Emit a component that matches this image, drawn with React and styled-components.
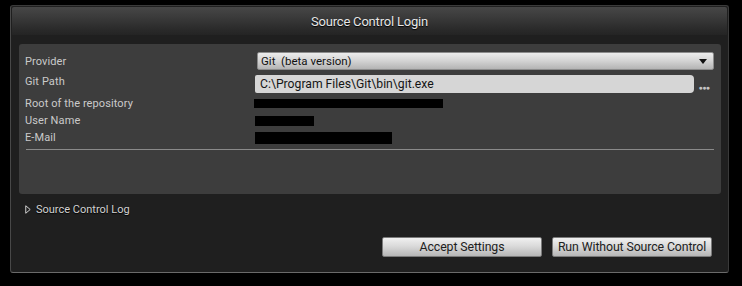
import React from "react";
import styled, { createGlobalStyle } from "styled-components";

const GlobalStyle = createGlobalStyle`
    html, body {
        margin: 0;
        padding: 0;
        background: #000;
    }
    body {
        font-family: Roboto, "Liberation Sans", sans-serif;
    }
`;

const Page = styled.div`
    width: 742px;
    height: 286px;
    padding: 5px 13px 0 10px;
    box-sizing: border-box;
`;

const Window = styled.div`
    height: 268px;
    display: flex;
    flex-direction: column;
    box-sizing: border-box;
    background: #1f1f1f;
    border: 1px solid #3a3a3a;
    border-left-color: #484848;
    border-bottom-color: #6a6a6a;
    border-radius: 3px;
`;

const TitleBar = styled.div`
    height: 28px;
    margin: 1px 1px 0;
    display: flex;
    align-items: center;
    justify-content: center;
    background: linear-gradient(#474747 0%, #3b3b3b 35%, #2a2a2a 80%, #242424 100%);
    border-radius: 2px 2px 0 0;
    color: #e6e6e6;
    font-size: 13px;
    letter-spacing: -0.2px;
    text-shadow: 0 1px 1px #000;
`;

const Panel = styled.div`
    margin: 9px 7px 0 8px;
    height: 150px;
    box-sizing: border-box;
    padding: 8px 7px 0 6px;
    background: #3d3d3d;
    border-radius: 3px;
`;

const Row = styled.div`
    display: flex;
    align-items: ${(p) => (p.$top ? "flex-start" : "center")};
    height: ${(p) => p.$h}px;
    margin-top: ${(p) => p.$mt || 0}px;
`;

const Label = styled.div`
    width: 230px;
    flex: none;
    color: #cacaca;
    font-size: 11px;
    line-height: 13px;
    letter-spacing: 0.1px;
`;

const Value = styled.div`
    flex: 1;
    display: flex;
    align-items: center;
    height: 100%;
`;

const Dropdown = styled.div`
    flex: 1;
    height: 18px;
    box-sizing: border-box;
    margin-left: 2px;
    padding: 0 6px 0 3px;
    display: flex;
    align-items: center;
    justify-content: space-between;
    background: linear-gradient(#ececec 0%, #d6d6d6 45%, #b4b4b4 100%);
    border: 1px solid #8c8c8c;
    border-radius: 2px;
    color: #111;
    font-size: 11.5px;
    white-space: pre;
`;

const Arrow = styled.span`
    width: 0;
    height: 0;
    border-left: 4px solid transparent;
    border-right: 4px solid transparent;
    border-top: 5px solid #111;
    margin-top: 1px;
`;

const TextInput = styled.div`
    flex: 1;
    height: 18px;
    box-sizing: border-box;
    padding-left: 5px;
    display: flex;
    align-items: center;
    background: #d6d6d6;
    border-radius: 2px 4px 4px 2px;
    color: #151515;
    font-size: 12.2px;
`;

const Browse = styled.span`
    width: 20px;
    flex: none;
    text-align: center;
    color: #c4c4c4;
    font-size: 7px;
    letter-spacing: -0.5px;
    padding-top: 7px;
`;

const Redacted = styled.div`
    width: ${(p) => p.$w}px;
    height: ${(p) => p.$hh}px;
    margin-left: ${(p) => p.$ml || 0}px;
    margin-top: ${(p) => p.$offset || 0}px;
    background: #000;
`;

const Separator = styled.div`
    height: 1px;
    margin: 3px 0 0 1px;
    background: #8a8a8a;
`;

const LogToggle = styled.div`
    display: flex;
    align-items: center;
    gap: 5px;
    margin: 9px 0 0 14px;
    height: 13px;
    color: #d2d2d2;
    font-size: 11px;
    text-shadow: 0 1px 1px #000;
`;

const Footer = styled.div`
    margin-top: auto;
    padding: 0 16px 15px 0;
    display: flex;
    justify-content: flex-end;
    gap: 10px;
`;

const Button = styled.button`
    width: 160px;
    height: 20px;
    padding: 0;
    box-sizing: border-box;
    background: linear-gradient(#f0f0f0 0%, #dadada 45%, #b6b6b6 100%);
    border: 1px solid #7a7a7a;
    border-radius: 2px;
    color: #202020;
    font-family: Roboto, "Liberation Sans", sans-serif;
    font-size: 12.3px;
    letter-spacing: -0.1px;
    white-space: nowrap;
`;

const App = () => {
    return (
        <Page>
            <GlobalStyle />
            <Window>
                <TitleBar>Source Control Login</TitleBar>
                <Panel>
                    <Row $h={18}>
                        <Label>Provider</Label>
                        <Value>
                            <Dropdown>
                                {"Git  (beta version)"}
                                <Arrow />
                            </Dropdown>
                        </Value>
                    </Row>
                    <Row $h={18} $mt={5} $top>
                        <Label>Git Path</Label>
                        <Value>
                            <TextInput>C:\Program Files\Git\bin\git.exe</TextInput>
                            <Browse>●●●</Browse>
                        </Value>
                    </Row>
                    <Row $h={17} $mt={2}>
                        <Label>Root of the repository</Label>
                        <Value>
                            <Redacted $w={189} $hh={9} $ml={-1} $offset={-1} />
                        </Value>
                    </Row>
                    <Row $h={17}>
                        <Label>User Name</Label>
                        <Value>
                            <Redacted $w={59} $hh={10} />
                        </Value>
                    </Row>
                    <Row $h={17}>
                        <Label>E-Mail</Label>
                        <Value>
                            <Redacted $w={137} $hh={12} $offset={1} />
                        </Value>
                    </Row>
                    <Separator />
                </Panel>
                <LogToggle>
                    <svg width="6" height="9" viewBox="0 0 6 9">
                        <path d="M0.75 0.75 L5.2 4.5 L0.75 8.25 Z" fill="none" stroke="#cfcfcf" strokeWidth="1" />
                    </svg>
                    Source Control Log
                </LogToggle>
                <Footer>
                    <Button>Accept Settings</Button>
                    <Button>Run Without Source Control</Button>
                </Footer>
            </Window>
        </Page>
    );
};

export default App;
